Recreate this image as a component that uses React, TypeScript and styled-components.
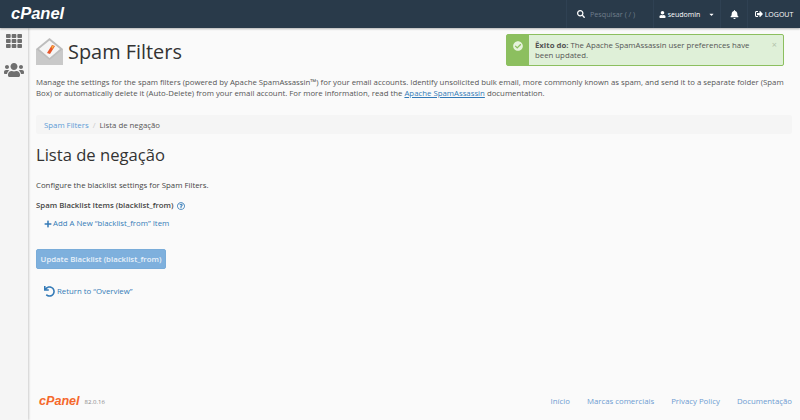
import React from 'react';
import styled, { createGlobalStyle } from 'styled-components';
import { FaSearch, FaUser, FaBell, FaCaretDown, FaUsers, FaPlus, FaUndo, FaCheckCircle, FaTh, FaSignOutAlt, FaRegQuestionCircle } from 'react-icons/fa';

const Global = createGlobalStyle`
  html, body { margin: 0; padding: 0; height: 100%; background: #fafafa; overflow: hidden; }
  body { font-family: "Open Sans", "Noto Sans", sans-serif; font-size: 7.8px; color: #333; }
  * { box-sizing: border-box; }
`;
const Page = styled.div`width: 800px; height: 420px; display: flex; flex-direction: column;`;
const Header = styled.header`
  height: 28px; background: #293a4a; display: flex; align-items: center; color: #fff;
  box-shadow: 0 1px 2px rgba(0,0,0,.3); position: relative; z-index: 2;
`;
const Logo = styled.span<{ $orange?: boolean }>`
  font-family: "Liberation Sans", sans-serif; font-weight: 700; font-style: italic;
  font-size: ${p => p.$orange ? '12.6px' : '16.5px'};
  color: ${p => p.$orange ? '#f5682b' : '#fff'};
`;
const HeaderLogo = styled.div`margin-left: 11px; flex: 1; line-height: 28px;`;
const HeaderCell = styled.div<{ $w: number }>`
  width: ${p => p.$w}px; height: 28px; display: flex; align-items: center; justify-content: center; gap: 2px;
  border-left: 1px solid #2f4153; font-size: 7px; color: #fff;
`;
const SearchCell = styled(HeaderCell)`justify-content: flex-start; padding-left: 10px; gap: 5px;`;
const SearchHint = styled.span`color: #6f7d8a; font-size: 7.2px;`;
const Caret = styled(FaCaretDown)`margin-left: 6px;`;
const Body = styled.div`flex: 1; display: flex; min-height: 0;`;
const Side = styled.nav`
  width: 28px; background: #f5f5f5; display: flex; flex-direction: column; align-items: center;
  padding-top: 5px; gap: 11px; color: #6f6f6f; box-shadow: 1px 0 2px rgba(0,0,0,.18);
`;
const Main = styled.main`flex: 1; display: flex; flex-direction: column; padding: 0 8px; min-width: 0;`;
const TitleRow = styled.div`display: flex; height: 40px; margin-top: 6px; justify-content: space-between; align-items: flex-start;`;
const TitleLeft = styled.div`display: flex; align-items: center; gap: 4px; height: 36px;`;
const Title = styled.h1`margin: 0; font-weight: 400; font-size: 19.9px; color: #333; line-height: 36px;`;
const Alert = styled.div`
  width: 278px; height: 32px; display: flex; border: 1px solid #8cbf5f; background: #dff0d8; border-radius: 2px; margin-right: 8px;
`;
const AlertIcon = styled.div`width: 22px; background: #8cbf5f; display: flex; justify-content: center; padding-top: 6px; color: #e6f3dc;`;
const AlertText = styled.div`flex: 1; padding: 5px 6px 0 6px; line-height: 10px; font-size: 7.8px; color: #555;`;
const AlertClose = styled.span`color: #b4c4ac; font-size: 9px; padding: 3px 6px 0 0; line-height: 14px;`;
const Desc = styled.p`margin: 3px 0 0; line-height: 10.5px; font-size: 7.8px; color: #555; height: 22px; white-space: nowrap;`;
const ALine = styled.a`color: #337ab7; text-decoration: underline;`;
const Crumb = styled.div`
  margin-top: 16px; height: 19px; background: #f5f5f5; border-radius: 2px; padding-left: 8px;
  display: flex; align-items: center; gap: 3px; font-size: 7.8px; color: #555;
`;
const CrumbLink = styled.span`color: #5b9bd5;`;
const CrumbSep = styled.span`color: #ccc; margin: 0 1px;`;
const H2 = styled.h2`margin: 9px 0 0; font-weight: 400; font-size: 16.6px; line-height: 24px; color: #333;`;
const Sub = styled.p`margin: 13px 0 0; font-size: 7.8px; line-height: 11px; color: #444;`;
const Label = styled.div`margin-top: 9px; font-size: 7.8px; font-weight: 600; line-height: 11px; color: #444; display: flex; align-items: center; gap: 3px;`;
const AddLink = styled.div`margin: 7px 0 0 8px; display: flex; align-items: center; gap: 1px; color: #337ab7; font-size: 7.8px; line-height: 11px;`;
const Btn = styled.button`
  margin-top: 20px; width: 130px; height: 20px; background: #7eb0dd; border: 1px solid #79acd9; border-radius: 2px;
  color: #e8f1f9; font: 600 7.8px "Open Sans", sans-serif; padding: 0; cursor: not-allowed; white-space: nowrap;
`;
const Return = styled.div`margin: 16px 0 0 8px; display: flex; align-items: center; gap: 2px; color: #337ab7; font-size: 7.8px; line-height: 12px;`;
const Footer = styled.footer`
  margin-top: auto; height: 38px; display: flex; align-items: center; justify-content: space-between;
`;
const FootLeft = styled.div`display: flex; align-items: flex-end; gap: 5px; padding-left: 3px;`;
const Version = styled.span`font-size: 6px; color: #888; line-height: 12px;`;
const FootLinks = styled.div`display: flex; gap: 17px; font-size: 7.8px; color: #6d9bd1;`;

const MailIcon = () => (
  <svg width="28" height="28" viewBox="0 0 28 28">
    <path d="M0 11 L13.5 0 L27 11 L27 27 L0 27 Z" fill="#bdbdbd" />
    <path d="M3 11 L13.5 2.5 L24 11 L13.5 20 Z" fill="#f5f5f5" />
    <path d="M0 11 L13.5 22 L27 11 L27 27 L0 27 Z" fill="#c9c9c9" />
    <path d="M11 15 L16 7 L19 8 L14 16 Z" fill="#e8562a" />
    <path d="M15.5 8 L17 7.5 L18 8.5 L16 11 Z" fill="#f4b13d" />
  </svg>
);

export default function App() {
  return (
    <Page>
      <Global />
      <Header>
        <HeaderLogo><Logo>cPanel</Logo></HeaderLogo>
        <SearchCell $w={87}><FaSearch size={8} /><SearchHint>Pesquisar ( / )</SearchHint></SearchCell>
        <HeaderCell $w={67}><FaUser size={7} />seudomin<Caret size={7} /></HeaderCell>
        <HeaderCell $w={27}><FaBell size={9} /></HeaderCell>
        <HeaderCell $w={53}><FaSignOutAlt size={8} />LOGOUT</HeaderCell>
      </Header>
      <Body>
        <Side><FaTh size={16} /><FaUsers size={20} /></Side>
        <Main>
          <TitleRow>
            <TitleLeft><MailIcon /><Title>Spam Filters</Title></TitleLeft>
            <Alert>
              <AlertIcon><FaCheckCircle size={10} /></AlertIcon>
              <AlertText><b>Êxito do:</b> The Apache SpamAssassin user preferences have been updated.</AlertText>
              <AlertClose>×</AlertClose>
            </Alert>
          </TitleRow>
          <Desc>
            Manage the settings for the spam filters (powered by Apache SpamAssassin™) for your email accounts. Identify unsolicited bulk email, more commonly known as spam, and send it to a separate folder (Spam<br />
            Box) or automatically delete it (Auto-Delete) from your email account. For more information, read the <ALine>Apache SpamAssassin</ALine> documentation.
          </Desc>
          <Crumb><CrumbLink>Spam Filters</CrumbLink><CrumbSep>/</CrumbSep>Lista de negação</Crumb>
          <H2>Lista de negação</H2>
          <Sub>Configure the blacklist settings for Spam Filters.</Sub>
          <Label>Spam Blacklist Items (blacklist_from)<FaRegQuestionCircle size={8} color="#337ab7" /></Label>
          <AddLink><FaPlus size={8} />Add A New “blacklist_from” Item</AddLink>
          <div><Btn disabled>Update Blacklist (blacklist_from)</Btn></div>
          <Return><FaUndo size={11} />Return to “Overview”</Return>
          <Footer>
            <FootLeft><Logo $orange>cPanel</Logo><Version>82.0.16</Version></FootLeft>
            <FootLinks><span>Início</span><span>Marcas comerciais</span><span>Privacy Policy</span><span>Documentação</span></FootLinks>
          </Footer>
        </Main>
      </Body>
    </Page>
  );
}
